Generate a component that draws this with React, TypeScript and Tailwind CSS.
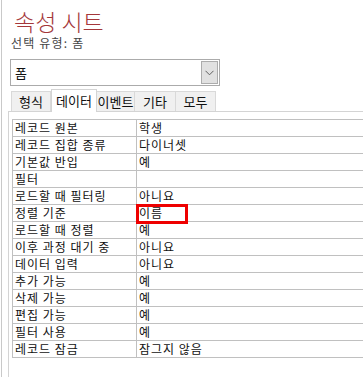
import React from "react";

const rows: [string, string][] = [
  ["레코드 원본", "학생"],
  ["레코드 집합 종류", "다이너셋"],
  ["기본값 반입", "예"],
  ["필터", ""],
  ["로드할 때 필터링", "아니요"],
  ["정렬 기준", "이름"],
  ["로드할 때 정렬", "예"],
  ["이후 과정 대기 중", "아니요"],
  ["데이터 입력", "아니요"],
  ["추가 가능", "예"],
  ["삭제 가능", "예"],
  ["편집 가능", "예"],
  ["필터 사용", "예"],
  ["레코드 잠금", "잠그지 않음"],
];

const tabs = [
  { label: "형식", w: "w-[40px]" },
  { label: "데이터", w: "w-[46px]", active: true },
  { label: "이벤트", w: "w-[39px]" },
  { label: "기타", w: "w-[42px]" },
  { label: "모두", w: "w-[41px]" },
];

export default function App() {
  return (
    <div className="h-[377px] w-[363px] overflow-hidden bg-white font-['Noto_Sans_CJK_KR',sans-serif] text-[#111]">
      <div className="ml-px flex h-full flex-col border-l border-[#c9c9c9]">
        <div className="pl-[12px] pt-[8px] text-[23px] font-light leading-[26px] text-[#a4373a]">속성 시트</div>
        <div className="pl-[9px] pt-[1px] text-[12px] leading-[16px] tracking-[1.2px] text-[#444]">선택 유형: 폼</div>
        <div className="ml-[8px] mt-[8px] flex h-[27px] w-[210px] items-center border border-[#ababab] bg-white pl-[4px] pr-px">
          <span className="flex-1 text-[13px] leading-[16px]">폼</span>
          <div className="flex h-[23px] w-[17px] items-center justify-center border border-[#acacac] bg-[#e1e1e1]">
            <svg width="9" height="6" viewBox="0 0 9 6">
              <path d="M0.5 0.8 L4.5 4.8 L8.5 0.8" fill="none" stroke="#606060" strokeWidth="1" />
            </svg>
          </div>
        </div>
        <div className="ml-[9px] mt-[3px] flex h-[22px] items-end">
          {tabs.map((t) =>
            t.active ? (
              <div
                key={t.label}
                className={`${t.w} relative z-10 -mb-px flex h-[23px] items-center justify-center border border-b-0 border-[#d4d4d4] bg-white text-[13px] leading-[16px]`}
              >
                {t.label}
              </div>
            ) : (
              <div
                key={t.label}
                className={`${t.w} -ml-px flex h-[20px] items-center justify-center border border-b-0 border-[#d9d9d9] bg-[#f0f0f0] text-[13px] leading-[16px] first:ml-0`}
              >
                {t.label}
              </div>
            )
          )}
        </div>
        <div className="ml-[6px] flex-1 border-l border-t border-[#d4d4d4] pl-[3px] pt-[7px]">
          <div className="w-[400px] border-l border-t border-[#c0c0c0]">
            {rows.map(([k, v]) => (
              <div key={k} className="grid h-[17px] grid-cols-[124px_1fr] border-b border-[#c0c0c0] text-[12px] leading-[16px] tracking-[1px]">
                <div className="border-r border-[#c0c0c0] pl-[2px]">{k}</div>
                <div className="relative pl-[2px]">
                  {v}
                  {v === "이름" && (
                    <div className="absolute left-[-1px] top-[-1px] h-[20px] w-[52px] border-[3px] border-[#ee0000]" />
                  )}
                </div>
              </div>
            ))}
          </div>
        </div>
      </div>
    </div>
  );
}
